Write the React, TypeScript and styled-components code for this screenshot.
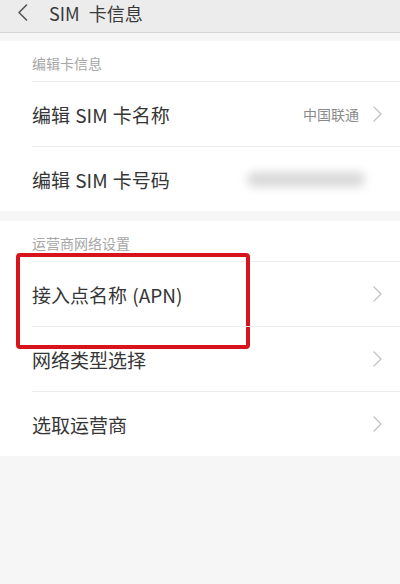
import React from 'react';
import styled, { createGlobalStyle } from 'styled-components';

const GlobalStyle = createGlobalStyle`
	html, body {
		margin: 0;
		padding: 0;
		background: #f5f6f5;
	}
	body {
		font-family: "Noto Sans CJK SC", "Noto Sans", sans-serif;
		-webkit-font-smoothing: antialiased;
	}
`;

const Page = styled.div`
	width: 400px;
	min-height: 584px;
	background: #f5f6f5;
	display: flex;
	flex-direction: column;
	gap: 8px;
	overflow: hidden;
`;

const Header = styled.header`
	height: 33px;
	box-sizing: border-box;
	padding: 0 0 7px 17px;
	background: #ececec;
	border-bottom: 1px solid #d6d6d6;
	display: flex;
	align-items: center;
	gap: 21px;
`;

const Title = styled.h1`
	margin: 0;
	font-size: 18px;
	font-weight: 400;
	color: #3a3a3a;
	line-height: 26px;
	word-spacing: 5px;
`;

const Section = styled.section<{ gapTop?: number }>`
	background: #fff;
	margin-top: ${props => props.gapTop || 0}px;
	display: flex;
	flex-direction: column;
`;

const SectionTitle = styled.div`
	height: 40px;
	box-sizing: border-box;
	margin-left: 32px;
	padding-top: 3px;
	display: flex;
	align-items: center;
	font-size: 14px;
	color: #a6a6a6;
`;

const Row = styled.div`
	position: relative;
	height: 65px;
	box-sizing: border-box;
	margin-left: 32px;
	padding-right: 18px;
	border-top: 1px solid #ededed;
	display: flex;
	align-items: center;
	gap: 14px;
`;

const Label = styled.span`
	flex: 1;
	font-size: 19px;
	color: #363636;
	word-spacing: 1px;
`;

const Value = styled.span`
	font-size: 14px;
	color: #8a8a8a;
`;

const Blurred = styled.span`
	width: 118px;
	height: 15px;
	margin-right: 17px;
	border-radius: 8px;
	background: #d9d9d9;
	filter: blur(5px);
`;

const Highlight = styled.div`
	position: absolute;
	left: -16px;
	top: -9px;
	width: 234px;
	height: 96px;
	box-sizing: border-box;
	border: 4px solid #d7141c;
	border-radius: 4px;
	pointer-events: none;
`;

const Chevron = ({ color = '#c2c2c2', w = 9, h = 16, stroke = 1.3 }) => (
	<svg width={w} height={h} viewBox="0 0 9 16" fill="none">
		<path d="M1 1l7 7-7 7" stroke={color} strokeWidth={stroke} strokeLinecap="round" strokeLinejoin="round" />
	</svg>
);

const BackIcon = () => (
	<svg width="11" height="17" viewBox="0 0 11 17" fill="none">
		<path d="M9.5 1L2 8.5 9.5 16" stroke="#555" strokeWidth="1.6" strokeLinecap="round" strokeLinejoin="round" />
	</svg>
);

export default function App() {
	return (
		<>
			<GlobalStyle />
			<Page>
				<Header>
					<BackIcon />
					<Title>SIM 卡信息</Title>
				</Header>
				<Section>
					<SectionTitle>编辑卡信息</SectionTitle>
					<Row>
						<Label>编辑 SIM 卡名称</Label>
						<Value>中国联通</Value>
						<Chevron />
					</Row>
					<Row>
						<Label>编辑 SIM 卡号码</Label>
						<Blurred />
					</Row>
				</Section>
				<Section gapTop={2}>
					<SectionTitle>运营商网络设置</SectionTitle>
					<Row>
						<Label>接入点名称 (APN)</Label>
						<Chevron />
						<Highlight />
					</Row>
					<Row>
						<Label>网络类型选择</Label>
						<Chevron />
					</Row>
					<Row>
						<Label>选取运营商</Label>
						<Chevron />
					</Row>
				</Section>
			</Page>
		</>
	);
}
